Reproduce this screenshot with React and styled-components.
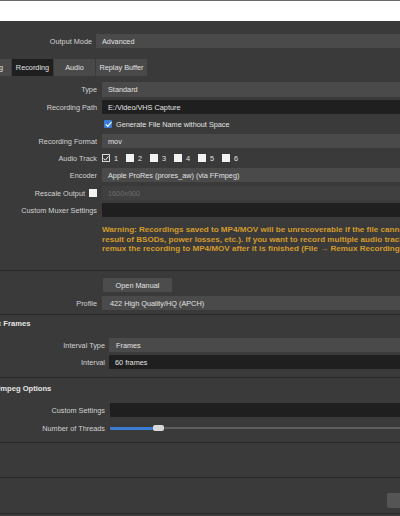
import React from "react";
import styled, { createGlobalStyle } from "styled-components";

const GlobalStyle = createGlobalStyle`
  html, body {
    margin: 0;
    padding: 0;
    background: #3a3a3a;
  }
  body {
    font-family: "Liberation Sans", Arial, sans-serif;
    font-size: 7.3px;
    color: #d6d6d6;
  }
`;

const Page = styled.div`
  width: 400px;
  height: 516px;
  overflow: hidden;
  background: #3a3a3a;
`;

const TopStrip = styled.div`
  height: 20px;
  background: #ffffff;
  border-top: 1px solid #6a6a6a;
`;

const Main = styled.div`
  display: flex;
  flex-direction: column;
  overflow: hidden;
`;

const Row = styled.div`
  display: grid;
  grid-template-columns: ${(p) => p.$lw || 97}px 1fr;
  column-gap: ${(p) => p.$gap || 5}px;
  height: ${(p) => p.$h || 14}px;
  margin-top: ${(p) => p.$mt || 3}px;
`;

const Label = styled.div`
  display: flex;
  align-items: center;
  justify-content: flex-end;
  gap: 4px;
  color: #d2d2d2;
  white-space: nowrap;
`;

const fieldBg = {
  combo: "#4a4a4a",
  input: "#1f1f1f",
  disabled: "#404040",
  plain: "transparent",
};

const Field = styled.div`
  display: flex;
  align-items: center;
  padding-left: ${(p) => (p.$pad !== undefined ? p.$pad : 6)}px;
  background: ${(p) => fieldBg[p.$kind || "combo"]};
  color: ${(p) => (p.$kind === "disabled" ? "#6c6c6c" : "#e2e2e2")};
  white-space: nowrap;
  overflow: hidden;
  gap: ${(p) => p.$gap || 0}px;
`;

const TabBar = styled.div`
  display: flex;
  gap: 1px;
  height: 17px;
  margin-top: 11px;
  margin-left: -38px;
`;

const Tab = styled.div`
  width: ${(p) => p.$w}px;
  flex: none;
  display: flex;
  align-items: center;
  justify-content: center;
  background: ${(p) => (p.$active ? "#1f1f1f" : "#494949")};
  color: #e0e0e0;
  white-space: nowrap;
`;

const Box = styled.span`
  width: 8px;
  height: 8px;
  flex: none;
  box-sizing: border-box;
  display: inline-flex;
  align-items: center;
  justify-content: center;
  background: ${(p) =>
    p.$variant === "blue" ? "#3b7dd3" : p.$variant === "outline" ? "transparent" : "#f2f2f2"};
  border: ${(p) => (p.$variant === "outline" ? "1px solid #d8d8d8" : "none")};
  border-radius: ${(p) => (p.$variant === "blue" ? "1px" : "0")};
`;

const CheckMark = () => (
  <svg width="7" height="7" viewBox="0 0 10 10">
    <polyline
      points="1.5,5.2 4,7.8 8.8,2"
      fill="none"
      stroke="#ffffff"
      strokeWidth="1.6"
      strokeLinecap="round"
      strokeLinejoin="round"
    />
  </svg>
);

const Check = ({ variant }) => (
  <Box $variant={variant}>{variant !== "plain" && <CheckMark />}</Box>
);

const TrackItem = styled.span`
  width: 24px;
  flex: none;
  display: flex;
  align-items: center;
  gap: 4px;
`;

const Warning = styled.div`
  margin-top: 8px;
  margin-left: 102px;
  color: #d39a2b;
  font-weight: bold;
  font-size: 8.1px;
  line-height: 9.5px;
  white-space: nowrap;
  overflow: hidden;
`;

const Divider = styled.div`
  height: 1px;
  background: #272727;
  margin-top: ${(p) => p.$mt}px;
`;

const Button = styled.div`
  width: 69px;
  margin-left: 1px;
  display: flex;
  align-items: center;
  justify-content: center;
  background: #4c4c4c;
  color: #e2e2e2;
  border-radius: 1px;
`;

const Header = styled.div`
  height: 14px;
  margin-top: ${(p) => p.$mt}px;
  margin-left: ${(p) => p.$shift}px;
  display: flex;
  align-items: center;
  font-weight: bold;
  font-size: 7.6px;
  color: #e4e4e4;
  white-space: nowrap;
`;

const Track = styled.div`
  position: relative;
  display: flex;
  align-items: center;
`;

const Groove = styled.div`
  flex: 1;
  height: 2px;
  background: #5e5e5e;
`;

const Fill = styled.div`
  position: absolute;
  left: 0;
  top: 6px;
  height: 3px;
  width: ${(p) => p.$w}px;
  background: #3b7dd3;
  border-radius: 1px;
`;

const Handle = styled.div`
  position: absolute;
  left: ${(p) => p.$x}px;
  top: 4px;
  width: 11px;
  height: 6px;
  background: #d9d9d9;
  border-radius: 2px;
`;

const BottomRow = styled.div`
  display: flex;
  justify-content: flex-end;
  height: 15px;
  margin-top: 15px;
  margin-right: -40px;
`;

const GhostButton = styled.div`
  width: 53px;
  background: #555555;
  border-radius: 2px;
`;

export default function App() {
  const tracks = [1, 2, 3, 4, 5, 6];
  return (
    <Page>
      <GlobalStyle />
      <TopStrip />
      <Main>
        <Row $lw={92} $gap={4} $mt={13}>
          <Label>Output Mode</Label>
          <Field>Advanced</Field>
        </Row>

        <TabBar>
          <Tab $w={49}>Streaming</Tab>
          <Tab $w={41} $active>
            Recording
          </Tab>
          <Tab $w={41}>Audio</Tab>
          <Tab $w={51}>Replay Buffer</Tab>
        </TabBar>

        <Row $mt={6} $h={15}>
          <Label>Type</Label>
          <Field>Standard</Field>
        </Row>
        <Row>
          <Label>Recording Path</Label>
          <Field $kind="input">E:/Video/VHS Capture</Field>
        </Row>
        <Row>
          <Label />
          <Field $kind="plain" $pad={2} $gap={4}>
            <Check variant="blue" />
            Generate File Name without Space
          </Field>
        </Row>
        <Row>
          <Label>Recording Format</Label>
          <Field>mov</Field>
        </Row>
        <Row>
          <Label>Audio Track</Label>
          <Field $kind="plain" $pad={0}>
            {tracks.map((n) => (
              <TrackItem key={n}>
                <Check variant={n === 1 ? "outline" : "plain"} />
                {n}
              </TrackItem>
            ))}
          </Field>
        </Row>
        <Row>
          <Label>Encoder</Label>
          <Field>Apple ProRes (prores_aw) (via FFmpeg)</Field>
        </Row>
        <Row $mt={4}>
          <Label>
            Rescale Output
            <Check variant="plain" />
          </Label>
          <Field $kind="disabled">1600x900</Field>
        </Row>
        <Row>
          <Label>Custom Muxer Settings</Label>
          <Field $kind="input" />
        </Row>

        <Warning>
          <div>
            Warning: Recordings saved to MP4/MOV will be unrecoverable if the file cannot be
            finalized (e.g. as a
          </div>
          <div>
            result of BSODs, power losses, etc.). If you want to record multiple audio tracks
            consider using MKV and
          </div>
          <div>remux the recording to MP4/MOV after it is finished (File → Remux Recordings)</div>
        </Warning>

        <Divider $mt={16.5} />

        <Row $mt={7}>
          <Label />
          <Button>Open Manual</Button>
        </Row>
        <Row $mt={4}>
          <Label>Profile</Label>
          <Field $pad={8}>422 High Quality/HQ (APCH)</Field>
        </Row>

        <Divider $mt={4} />

        <Header $mt={1} $shift={-3}>
          c Frames
        </Header>
        <Row $lw={105} $gap={4} $mt={8}>
          <Label>Interval Type</Label>
          <Field $pad={7}>Frames</Field>
        </Row>
        <Row $lw={105} $gap={4}>
          <Label>Interval</Label>
          <Field $kind="input">60 frames</Field>
        </Row>

        <Divider $mt={8} />

        <Header $mt={3} $shift={-9}>
          FFmpeg Options
        </Header>
        <Row $lw={105} $gap={5} $mt={8}>
          <Label>Custom Settings</Label>
          <Field $kind="input" />
        </Row>
        <Row $lw={105} $gap={5} $mt={4}>
          <Label>Number of Threads</Label>
          <Track>
            <Groove />
            <Fill $w={45} />
            <Handle $x={43} />
          </Track>
        </Row>

        <Divider $mt={7} />
        <Divider $mt={34} />

        <BottomRow>
          <GhostButton />
        </BottomRow>

        <Divider $mt={5} />
      </Main>
    </Page>
  );
}
